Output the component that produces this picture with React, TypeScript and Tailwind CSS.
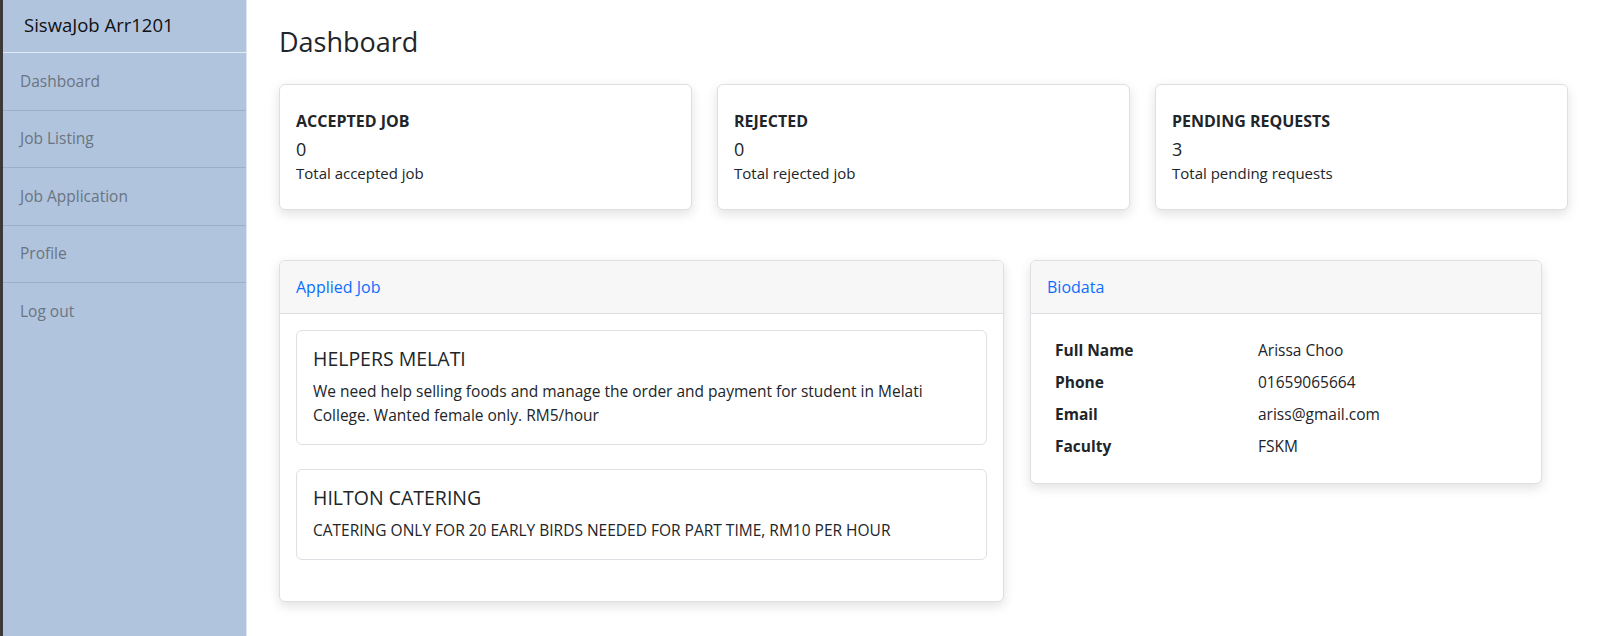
import React from 'react';

interface StatCard {
  title: string;
  value: number;
  caption: string;
}

interface AppliedJob {
  name: string;
  description: string;
}

const stats: StatCard[] = [
  { title: 'ACCEPTED JOB', value: 0, caption: 'Total accepted job' },
  { title: 'REJECTED', value: 0, caption: 'Total rejected job' },
  { title: 'PENDING REQUESTS', value: 3, caption: 'Total pending requests' },
];

const jobs: AppliedJob[] = [
  {
    name: 'HELPERS MELATI',
    description:
      'We need help selling foods and manage the order and payment for student in Melati College. Wanted female only. RM5/hour',
  },
  {
    name: 'HILTON CATERING',
    description: 'CATERING ONLY FOR 20 EARLY BIRDS NEEDED FOR PART TIME, RM10 PER HOUR',
  },
];

const biodata: [string, string][] = [
  ['Full Name', 'Arissa Choo'],
  ['Phone', '01659065664'],
  ['Email', 'ariss@gmail.com'],
  ['Faculty', 'FSKM'],
];

const navItems = ['Dashboard', 'Job Listing', 'Job Application', 'Profile', 'Log out'];

const Sidebar: React.FC = () => {
  return (
    <div className="w-[244px] shrink-0 h-full bg-[#b0c4de] border-r border-[#dfe6ef] flex flex-col">
      <div className="h-[53px] border-b border-[#e4eaf2] pl-[21px] flex items-center text-[18.5px] text-[#111] pb-[2px]">
        SiswaJob Arr1201
      </div>
      {navItems.map((item, i) => (
        <a
          key={item}
          href="#"
          className={`h-[57.5px] pl-[17px] flex items-center text-[15.5px] text-[#6b7480] ${
            i < navItems.length - 1 ? 'border-b border-[#9cafc8]' : ''
          }`}
        >
          {item}
        </a>
      ))}
    </div>
  );
};

export default function App() {
  return (
    <div
      className="flex h-screen w-full bg-white text-[#212529]"
      style={{ fontFamily: '"Segoe UI", "Open Sans", "Noto Sans", sans-serif' }}
    >
      <div className="w-[3px] shrink-0 bg-[#3a3a3a]" />
      <Sidebar />

      <main className="flex-1 px-[32px] pt-[24px]">
        <h2 className="text-[27px] leading-[36px] font-medium mb-[24px]">Dashboard</h2>

        <div className="grid grid-cols-3 gap-[25px]">
          {stats.map((s) => (
            <div
              key={s.title}
              className="bg-white border border-[#dcdfe3] rounded-md shadow-[0_4px_12px_rgba(0,0,0,0.12)] px-[16px] py-[25px]"
            >
              <div className="text-[16px] leading-[22px] font-bold mb-[4px]">{s.title}</div>
              <div className="text-[18px] leading-[26px] font-medium">{s.value}</div>
              <div className="text-[15px] leading-[22px]">{s.caption}</div>
            </div>
          ))}
        </div>

        <div className="grid grid-cols-[725px_512px] gap-[26px] mt-[50px] items-start">
          <div className="bg-white border border-[#dcdfe3] rounded-md shadow-[0_4px_12px_rgba(0,0,0,0.12)] overflow-hidden">
            <div className="h-[53px] bg-[#f7f7f7] border-b border-[#dcdfe3] px-[16px] flex items-center text-[16px] text-[#0d6efd]">
              Applied Job
            </div>
            <div className="px-4 pt-4 pb-[17px]">
              {jobs.map((job) => (
                <div key={job.name} className="border border-[#dcdfe3] rounded-md px-4 pt-4 pb-[17px] mb-6">
                  <div className="text-[19.5px] leading-[24px] font-medium mb-2">{job.name}</div>
                  <p className="text-[15.5px] leading-[24px]">{job.description}</p>
                </div>
              ))}
            </div>
          </div>

          <div className="bg-white border border-[#dcdfe3] rounded-md shadow-[0_4px_12px_rgba(0,0,0,0.12)] overflow-hidden">
            <div className="h-[53px] bg-[#f7f7f7] border-b border-[#dcdfe3] px-[16px] flex items-center text-[16px] text-[#0d6efd]">
              Biodata
            </div>
            <div className="px-[24px] pt-[21px] pb-[20px]">
              {biodata.map(([label, value]) => (
                <div key={label} className="grid grid-cols-[203px_1fr] h-[32px] items-center text-[15.5px]">
                  <span className="font-bold">{label}</span>
                  <span>{value}</span>
                </div>
              ))}
            </div>
          </div>
        </div>
      </main>
    </div>
  );
}
